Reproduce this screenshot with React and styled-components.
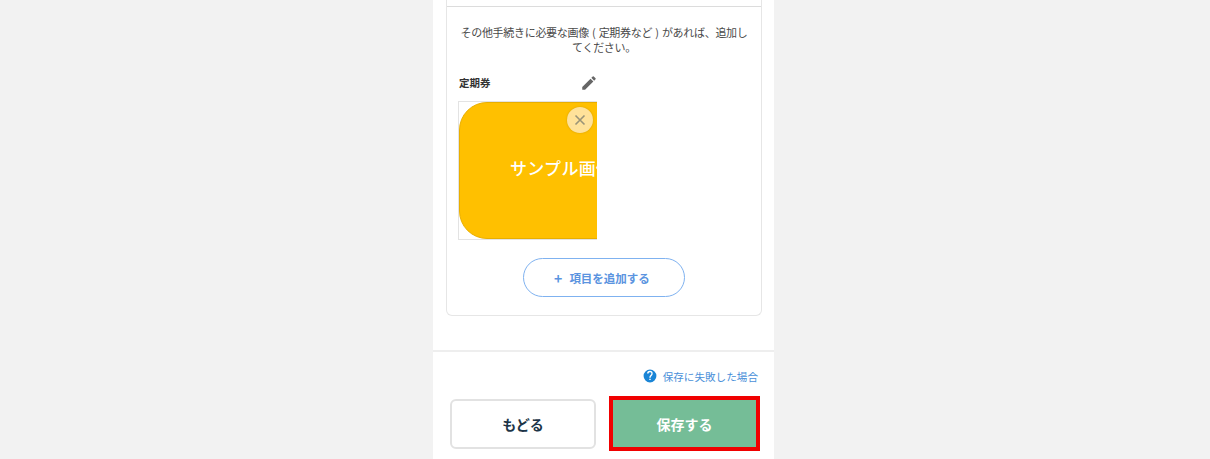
import React from "react";
import styled, { createGlobalStyle } from "styled-components";

const Global = createGlobalStyle`
  html, body { margin: 0; padding: 0; height: 459px; overflow: hidden; background: #f2f2f2; }
  body { font-family: "Noto Sans CJK JP", "Noto Sans", sans-serif; }
`;
const Page = styled.div`
  display: flex; justify-content: center; height: 459px;
`;
const Column = styled.main`
  width: 341px; height: 459px; background: #fff; display: flex; flex-direction: column; margin-left: -3px;
`;
const Section = styled.section`
  padding: 0 12px 0 13px; height: 350px; box-sizing: border-box;
`;
const Card = styled.div`
  height: 316px; box-sizing: border-box; border: 1px solid #e6e6e6; border-top: 0;
  border-radius: 0 0 6px 6px; display: flex; flex-direction: column;
`;
const TopRule = styled.div`
  height: 1px; margin-top: 6px; background: #dcdcdc;
`;
const Lead = styled.p`
  margin: 18px 12px 0; font-size: 11px; line-height: 15px; letter-spacing: -0.3px; word-spacing: 1px;
  color: #4a4a4a; text-align: center;
`;
const ImageBlock = styled.div`
  width: 139px; margin: 18px 0 0 12px;
`;
const ImageHead = styled.div`
  display: flex; align-items: center; justify-content: space-between; height: 20px;
`;
const ImageLabel = styled.span`
  font-size: 10.5px; font-weight: 700; color: #333; padding-bottom: 2px;
`;
const EditIcon = styled.svg`
  width: 18px; height: 18px; fill: #666; display: block;
`;
const Thumb = styled.div`
  position: relative; width: 138px; height: 139px; margin-top: 8px; box-sizing: border-box;
  border: 1px solid #e3e3e3; border-width: 1px 0; box-shadow: -1px 0 0 #e3e3e3; overflow: hidden; background: #fff;
`;
const Sample = styled.div`
  width: 230px; height: 137px; background: #ffc000; border-radius: 28px;
  border: 1px solid #e8ae00; box-sizing: border-box;
  display: flex; align-items: center; justify-content: flex-start; padding: 0 0 6px 50px;
  color: #fff; font-size: 17px; letter-spacing: 0.3px; font-weight: 500; white-space: nowrap;
`;
const Remove = styled.button`
  position: absolute; top: 5px; right: 4px; width: 26px; height: 26px; padding: 0; border: 0;
  border-radius: 50%; background: #ffe29a; box-shadow: 0 0 2px rgba(120,90,0,.35);
  display: flex; align-items: center; justify-content: center;
`;
const AddRow = styled.div`
  display: flex; justify-content: center; margin-top: 18px;
`;
const AddButton = styled.button`
  width: 162px; height: 39px; border: 1.5px solid #7fb2f0; border-radius: 20px; background: #fff;
  color: #5b94e0; font: 700 11.5px "Noto Sans CJK JP", sans-serif;
  display: flex; align-items: center; justify-content: center; gap: 7px; padding: 0 4px 0 0;
`;
const Plus = styled.span`
  font-size: 14px; line-height: 1; font-weight: 700;
`;
const Footer = styled.footer`
  flex: 1; border-top: 2px solid #eeeeee; padding: 0 14px 0 17px; display: flex; flex-direction: column;
`;
const Help = styled.a`
  display: flex; align-items: center; justify-content: flex-end; gap: 6px; margin-top: 16px; height: 16px;
  color: #4a90d9; font-size: 10.6px; padding-right: 2px;
`;
const HelpIcon = styled.svg`
  width: 14px; height: 14px; display: block;
`;
const Actions = styled.div`
  display: flex; justify-content: space-between; align-items: flex-start; margin-top: 12px;
`;
const BackButton = styled.button`
  width: 146px; height: 50px; margin-top: 3px; background: #fff; border: 2px solid #e2e2e2; border-radius: 6px;
  color: #1d3548; font: 700 14px "Noto Sans CJK JP", sans-serif; padding: 0;
`;
const SaveFrame = styled.div`
  width: 151px; height: 55px; box-sizing: border-box; border: 4px solid #f00000; display: flex;
`;
const SaveButton = styled.button`
  flex: 1; background: #75bd97; border: 0; color: #fff;
  font: 700 14px "Noto Sans CJK JP", sans-serif; padding: 0;
`;

export default function App() {
  return (
    <>
      <Global />
      <Page>
        <Column>
          <Section>
            <Card>
              <TopRule />
              <Lead>その他手続きに必要な画像 ( 定期券など ) があれば、追加してください。</Lead>
              <ImageBlock>
                <ImageHead>
                  <ImageLabel>定期券</ImageLabel>
                  <EditIcon viewBox="0 0 24 24">
                    <path d="M3 17.25V21h3.75L17.81 9.94l-3.75-3.75L3 17.25zM20.71 7.04a1 1 0 0 0 0-1.41l-2.34-2.34a1 1 0 0 0-1.41 0l-1.83 1.83 3.75 3.75 1.83-1.83z" />
                  </EditIcon>
                </ImageHead>
                <Thumb>
                  <Sample>サンプル画像</Sample>
                  <Remove aria-label="削除">
                    <svg width="12" height="12" viewBox="0 0 12 12">
                      <path d="M1.5 1.5l9 9M10.5 1.5l-9 9" stroke="#9a9478" strokeWidth="1.6" fill="none" />
                    </svg>
                  </Remove>
                </Thumb>
              </ImageBlock>
              <AddRow>
                <AddButton><Plus>+</Plus>項目を追加する</AddButton>
              </AddRow>
            </Card>
          </Section>
          <Footer>
            <Help>
              <HelpIcon viewBox="0 0 24 24">
                <path fill="#1a85d6" d="M12 1a11 11 0 1 0 0 22 11 11 0 0 0 0-22zm1.2 18h-2.4v-2.400h2.400V19zm2.500-8.200-1.100 1.100c-.9.9-1.400 1.600-1.400 3.100h-2.400v-.6c0-1.300.5-2.500 1.400-3.400l1.500-1.500c.4-.4.7-1 .7-1.700a2.400 2.400 0 0 0-4.800 0H7a4.800 4.800 0 0 1 9.600 0c0 1.100-.4 2.100-.9 3z" />
              </HelpIcon>
              保存に失敗した場合
            </Help>
            <Actions>
              <BackButton>もどる</BackButton>
              <SaveFrame>
                <SaveButton>保存する</SaveButton>
              </SaveFrame>
            </Actions>
          </Footer>
        </Column>
      </Page>
    </>
  );
}
